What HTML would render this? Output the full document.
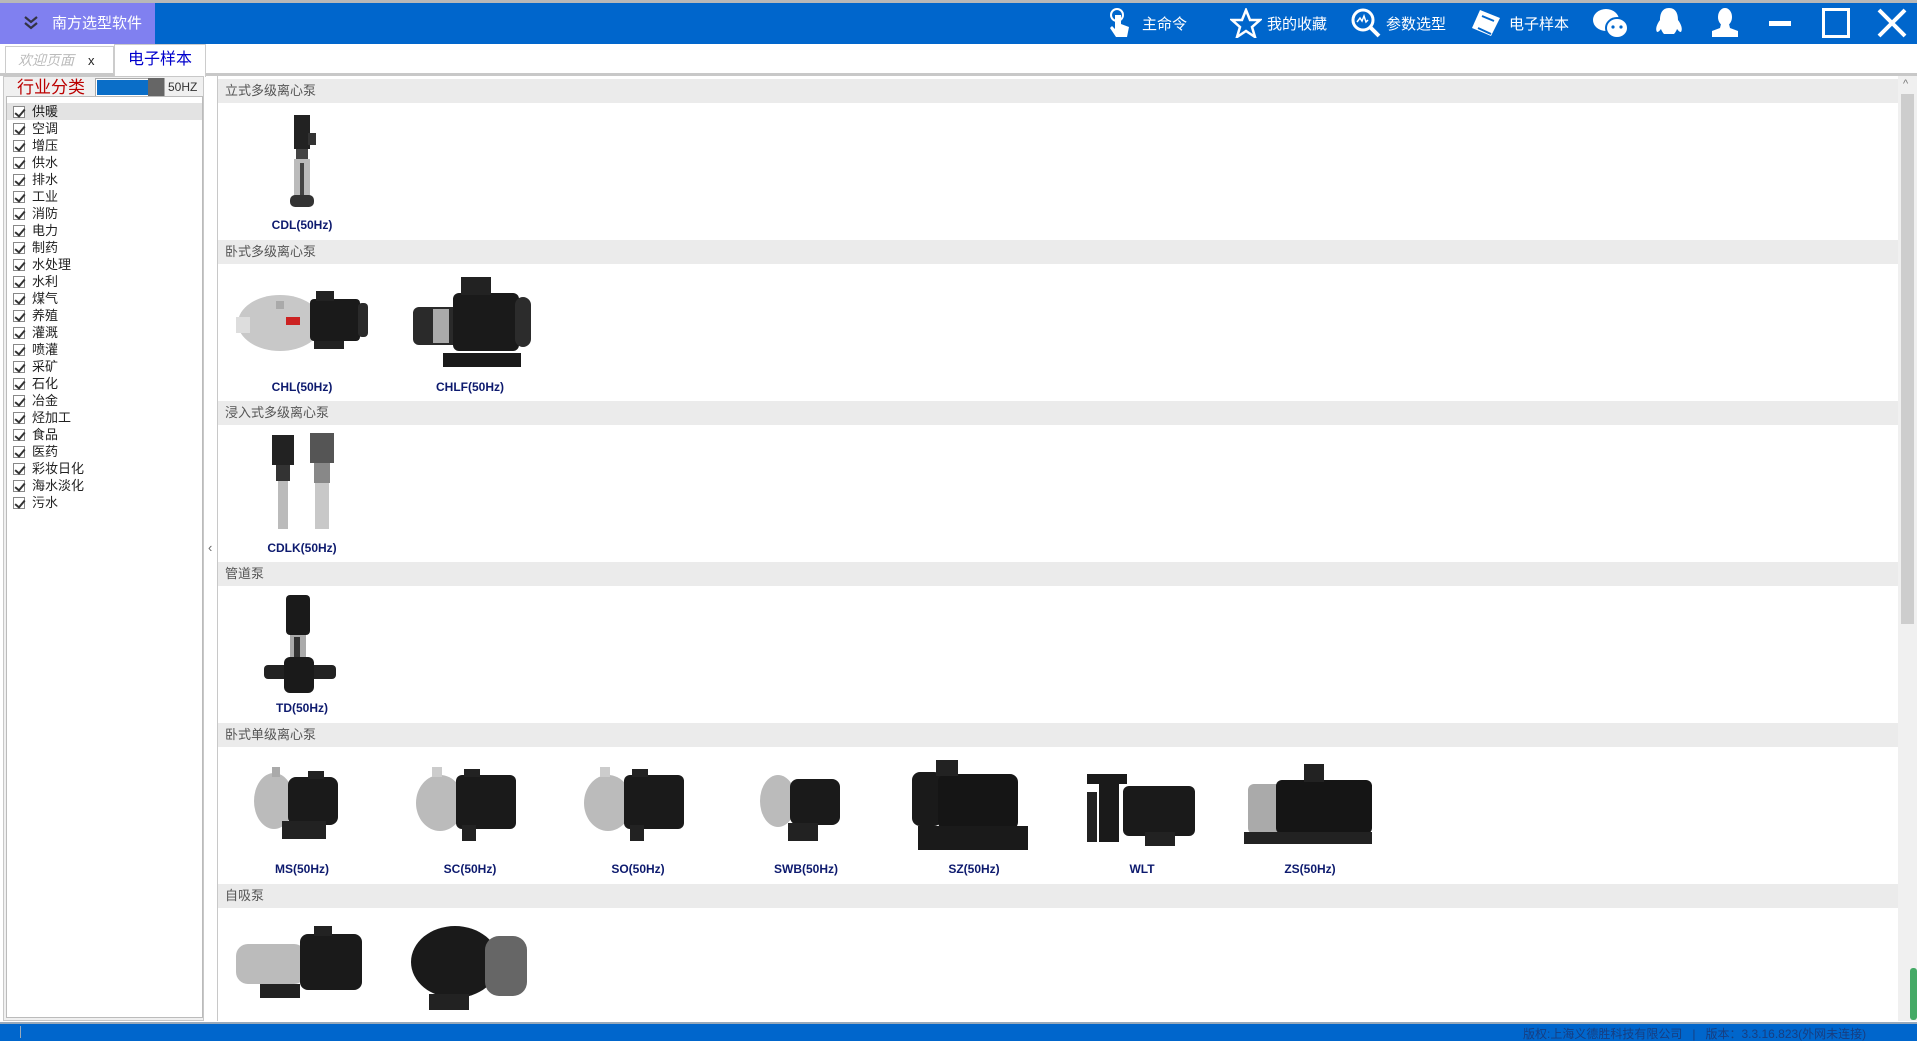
<!DOCTYPE html>
<html><head><meta charset="utf-8">
<style>
*{margin:0;padding:0;box-sizing:border-box}
body{width:1917px;height:1041px;overflow:hidden;background:#fff;font-family:"Liberation Sans","Noto Sans CJK SC",sans-serif;position:relative}
.a{position:absolute}
#title{left:0;top:0;width:1917px;height:44px;background:#0066cc;border-top:3px solid #b8b8b8}
#brand{left:0;top:3px;width:155px;height:41px;background:#8080f0;color:#fff;font-size:15px;line-height:41px;padding-left:52px}
.tt{color:#fff;font-size:15px;top:13px}
#tabs{left:0;top:44px;width:1917px;height:32px;background:#fff;border-bottom:3px solid #c8c8c8}
#side{left:3px;top:76px;width:201px;height:945px;background:#f0f0f0;border:1px solid #c8c8c8}
#list{left:6px;top:96px;width:197px;height:922px;background:#fff;border:1px solid #bbb}
.it{position:absolute;left:0;width:195px;height:17px;font-size:13px;line-height:17px;color:#222;padding-left:25px}
.cb{position:absolute;left:6px;top:3px;width:12px;height:12px;border:1px solid #888;background:#fff}
.cb:after{content:"";position:absolute;left:3px;top:0px;width:4px;height:8px;border:solid #333;border-width:0 2px 2px 0;transform:rotate(40deg)}
#main{left:217px;top:76px;width:1681px;height:945px;background:#fff;border-left:1px solid #c8c8c8}
.sh{position:absolute;left:218px;width:1680px;height:24px;background:#ebebeb;color:#555;font-size:13px;line-height:24px;padding-left:7px}
.lb{position:absolute;width:160px;text-align:center;font-size:12px;font-weight:bold;color:#0d1a6e}
.pm{position:absolute}
#status{left:0;top:1022px;width:1917px;height:19px;background:#0066cc;border-top:2px solid #9ab}
</style></head><body>
<div id="title" class="a"></div>
<div id="brand" class="a">南方选型软件</div>
<svg class="a" style="left:22px;top:15px" width="18" height="16" viewBox="0 0 18 16"><path d="M3 2l6 5 6-5M3 8l6 5 6-5" stroke="#334" stroke-width="2.2" fill="none"/></svg>

<!-- top right icons -->
<svg class="a" style="left:1108px;top:7px" width="22" height="32" viewBox="0 0 22 32"><circle cx="9" cy="8" r="6" fill="none" stroke="#fff" stroke-width="2"/><path d="M7 8v14l-3-3-2 2 6 9h11l2-10-8-3v-9" fill="#fff"/></svg>
<div class="a tt" style="left:1142px">主命令</div>
<svg class="a" style="left:1230px;top:8px" width="32" height="30" viewBox="0 0 32 30"><path d="M16 2l4 10h10l-8 7 3 10-9-6-9 6 3-10-8-7h10z" fill="none" stroke="#fff" stroke-width="2.5"/></svg>
<div class="a tt" style="left:1267px">我的收藏</div>
<svg class="a" style="left:1350px;top:7px" width="32" height="32" viewBox="0 0 32 32"><circle cx="13" cy="13" r="10" fill="none" stroke="#fff" stroke-width="3"/><path d="M20 20l9 9" stroke="#fff" stroke-width="4"/><path d="M7 15l3-4 2 3 2-5 2 6 2-2" stroke="#fff" stroke-width="1.5" fill="none"/></svg>
<div class="a tt" style="left:1386px">参数选型</div>
<svg class="a" style="left:1470px;top:8px" width="32" height="30" viewBox="0 0 32 30"><path d="M10 2l20 8-9 18L2 20z" fill="#fff"/><path d="M8 20l13 6M12 8l12 5" stroke="#0066cc" stroke-width="2"/></svg>
<div class="a tt" style="left:1509px">电子样本</div>
<svg class="a" style="left:1592px;top:7px" width="38" height="34" viewBox="0 0 38 34"><ellipse cx="14" cy="13" rx="13" ry="11" fill="#fff"/><ellipse cx="25" cy="21" rx="11" ry="10" fill="#fff" stroke="#0066cc" stroke-width="2"/><circle cx="21" cy="20" r="1.6" fill="#0066cc"/><circle cx="29" cy="20" r="1.6" fill="#0066cc"/></svg>
<svg class="a" style="left:1653px;top:6px" width="32" height="34" viewBox="0 0 32 34"><path d="M16 2c-7 0-9 6-9 12-3 4-5 9-3 12 2 0 3-2 4-3 1 3 3 5 3 5h10s2-2 3-5c1 1 2 3 4 3 2-3 0-8-3-12 0-6-2-12-9-12z" fill="#fff"/></svg>
<svg class="a" style="left:1710px;top:7px" width="30" height="32" viewBox="0 0 30 32"><ellipse cx="15" cy="10" rx="7" ry="9" fill="#fff"/><path d="M11 17h8l1 4 8 3v6H2v-6l8-3z" fill="#fff"/></svg>
<div class="a" style="left:1769px;top:21px;width:22px;height:5px;background:#fff"></div>
<div class="a" style="left:1822px;top:8px;width:28px;height:30px;border:3px solid #fff"></div>
<svg class="a" style="left:1876px;top:7px" width="32" height="32" viewBox="0 0 32 32"><path d="M3 3l26 26M29 3L3 29" stroke="#fff" stroke-width="4"/></svg>

<div id="tabs" class="a"></div>
<div class="a" style="left:5px;top:46px;width:109px;height:28px;border:1px solid #ccc;border-bottom:none;color:#bbb;font-style:italic;font-size:14px;line-height:26px;padding-left:12px">欢迎页面<span style="font-style:normal;color:#222;margin-left:14px;font-size:13px">x</span></div>
<div class="a" style="left:114px;top:44px;width:92px;height:33px;background:#fff;border:1px solid #ccc;border-bottom:none;color:#0000cc;font-size:16px;line-height:30px;text-align:center">电子样本</div>

<div id="side" class="a"></div>
<div class="a" style="left:17px;top:77px;color:#b00;font-size:17px;line-height:21px">行业分类</div>
<div class="a" style="left:95px;top:78px;width:70px;height:19px;border:1px solid #aaa;background:#fff"></div>
<div class="a" style="left:97px;top:80px;width:52px;height:15px;background:#0a6ec8"></div>
<div class="a" style="left:148px;top:78px;width:16px;height:19px;background:#666"></div>
<div class="a" style="left:168px;top:80px;font-size:12px;color:#333">50HZ</div>
<div id="list" class="a">
<div class="it" style="top:6px;background:#e3e3e3"><i class="cb"></i>供暖</div>
<div class="it" style="top:23px"><i class="cb"></i>空调</div>
<div class="it" style="top:40px"><i class="cb"></i>增压</div>
<div class="it" style="top:57px"><i class="cb"></i>供水</div>
<div class="it" style="top:74px"><i class="cb"></i>排水</div>
<div class="it" style="top:91px"><i class="cb"></i>工业</div>
<div class="it" style="top:108px"><i class="cb"></i>消防</div>
<div class="it" style="top:125px"><i class="cb"></i>电力</div>
<div class="it" style="top:142px"><i class="cb"></i>制药</div>
<div class="it" style="top:159px"><i class="cb"></i>水处理</div>
<div class="it" style="top:176px"><i class="cb"></i>水利</div>
<div class="it" style="top:193px"><i class="cb"></i>煤气</div>
<div class="it" style="top:210px"><i class="cb"></i>养殖</div>
<div class="it" style="top:227px"><i class="cb"></i>灌溉</div>
<div class="it" style="top:244px"><i class="cb"></i>喷灌</div>
<div class="it" style="top:261px"><i class="cb"></i>采矿</div>
<div class="it" style="top:278px"><i class="cb"></i>石化</div>
<div class="it" style="top:295px"><i class="cb"></i>冶金</div>
<div class="it" style="top:312px"><i class="cb"></i>烃加工</div>
<div class="it" style="top:329px"><i class="cb"></i>食品</div>
<div class="it" style="top:346px"><i class="cb"></i>医药</div>
<div class="it" style="top:363px"><i class="cb"></i>彩妆日化</div>
<div class="it" style="top:380px"><i class="cb"></i>海水淡化</div>
<div class="it" style="top:397px"><i class="cb"></i>污水</div>
</div>
<div class="a" style="left:208px;top:540px;color:#666;font-size:13px">‹</div>

<div id="main" class="a"></div>
<div class="a" style="left:1898px;top:76px;width:19px;height:945px;background:#f0f0f0"></div>
<div class="a" style="left:1901px;top:94px;width:13px;height:530px;background:#cdcdcd"></div>
<div class="a" style="left:1903px;top:78px;color:#777;font-size:11px">^</div>
<div class="a" style="left:1910px;top:968px;width:7px;height:52px;background:#4a6;border-radius:3px"></div>

<div class="sh" style="top:79px">立式多级离心泵</div>
<div class="sh" style="top:240px">卧式多级离心泵</div>
<div class="sh" style="top:401px">浸入式多级离心泵</div>
<div class="sh" style="top:562px">管道泵</div>
<div class="sh" style="top:723px">卧式单级离心泵</div>
<div class="sh" style="top:884px">自吸泵</div>

<!-- CDL vertical -->
<svg class="pm" style="left:282px;top:113px" width="40" height="97" viewBox="0 0 40 97"><rect x="12" y="2" width="16" height="34" fill="#222"/><rect x="26" y="20" width="8" height="12" fill="#333"/><rect x="14" y="36" width="12" height="10" fill="#444"/><rect x="12" y="46" width="16" height="38" fill="#bbb"/><rect x="18" y="50" width="4" height="32" fill="#444"/><rect x="8" y="82" width="24" height="12" rx="5" fill="#333"/></svg>
<div class="lb" style="left:222px;top:218px">CDL(50Hz)</div>

<!-- CHL, CHLF -->
<svg class="pm" style="left:230px;top:283px" width="145" height="80" viewBox="0 0 145 80"><ellipse cx="50" cy="40" rx="42" ry="28" fill="#c8c8c8"/><rect x="6" y="34" width="14" height="16" fill="#ddd"/><rect x="46" y="18" width="8" height="8" fill="#aaa"/><rect x="56" y="34" width="14" height="8" fill="#c22"/><rect x="80" y="16" width="50" height="42" rx="4" fill="#1a1a1a"/><rect x="86" y="8" width="18" height="10" fill="#222"/><rect x="128" y="20" width="10" height="34" rx="4" fill="#2a2a2a"/><rect x="84" y="58" width="30" height="8" fill="#222"/></svg>
<div class="lb" style="left:222px;top:380px">CHL(50Hz)</div>
<svg class="pm" style="left:405px;top:273px" width="135" height="100" viewBox="0 0 135 100"><rect x="8" y="34" width="48" height="38" rx="6" fill="#2a2a2a"/><rect x="28" y="36" width="16" height="34" fill="#aaa"/><rect x="48" y="20" width="66" height="58" rx="6" fill="#1a1a1a"/><rect x="56" y="4" width="30" height="18" fill="#222"/><rect x="110" y="24" width="16" height="50" rx="8" fill="#2c2c2c"/><rect x="38" y="80" width="78" height="14" fill="#1a1a1a"/></svg>
<div class="lb" style="left:390px;top:380px">CHLF(50Hz)</div>

<!-- CDLK -->
<svg class="pm" style="left:262px;top:433px" width="84" height="100" viewBox="0 0 84 100"><rect x="10" y="2" width="22" height="30" fill="#222"/><rect x="14" y="32" width="14" height="16" fill="#333"/><rect x="16" y="48" width="10" height="48" fill="#bbb"/><rect x="48" y="0" width="24" height="30" fill="#555"/><rect x="52" y="30" width="16" height="20" fill="#888"/><rect x="53" y="50" width="14" height="46" fill="#c8c8c8"/></svg>
<div class="lb" style="left:222px;top:541px">CDLK(50Hz)</div>

<!-- TD -->
<svg class="pm" style="left:260px;top:593px" width="80" height="103" viewBox="0 0 80 103"><rect x="26" y="2" width="24" height="40" rx="4" fill="#1a1a1a"/><rect x="30" y="42" width="16" height="24" fill="#aaa"/><rect x="34" y="44" width="6" height="20" fill="#333"/><rect x="4" y="72" width="72" height="14" rx="4" fill="#222"/><rect x="24" y="64" width="30" height="36" rx="6" fill="#1a1a1a"/></svg>
<div class="lb" style="left:222px;top:701px">TD(50Hz)</div>

<!-- single stage row -->
<svg class="pm" style="left:252px;top:763px" width="100" height="82" viewBox="0 0 100 82"><ellipse cx="22" cy="38" rx="20" ry="28" fill="#bbb"/><rect x="20" y="4" width="8" height="10" fill="#aaa"/><rect x="36" y="14" width="50" height="48" rx="8" fill="#1a1a1a"/><rect x="56" y="8" width="16" height="8" fill="#222"/><rect x="30" y="58" width="44" height="18" fill="#222"/></svg>
<div class="lb" style="left:222px;top:862px">MS(50Hz)</div>
<svg class="pm" style="left:412px;top:765px" width="115" height="82" viewBox="0 0 115 82"><ellipse cx="28" cy="38" rx="24" ry="28" fill="#bbb"/><rect x="20" y="2" width="10" height="10" fill="#ccc"/><rect x="44" y="10" width="60" height="54" rx="6" fill="#1a1a1a"/><rect x="52" y="4" width="16" height="8" fill="#222"/><rect x="50" y="60" width="14" height="16" fill="#222"/></svg>
<div class="lb" style="left:390px;top:862px">SC(50Hz)</div>
<svg class="pm" style="left:580px;top:765px" width="115" height="82" viewBox="0 0 115 82"><ellipse cx="28" cy="38" rx="24" ry="28" fill="#bbb"/><rect x="20" y="2" width="10" height="10" fill="#ccc"/><rect x="44" y="10" width="60" height="54" rx="6" fill="#1a1a1a"/><rect x="52" y="4" width="16" height="8" fill="#222"/><rect x="50" y="60" width="14" height="16" fill="#222"/></svg>
<div class="lb" style="left:558px;top:862px">SO(50Hz)</div>
<svg class="pm" style="left:758px;top:765px" width="95" height="82" viewBox="0 0 95 82"><ellipse cx="20" cy="36" rx="18" ry="26" fill="#bbb"/><rect x="32" y="14" width="50" height="46" rx="8" fill="#1a1a1a"/><rect x="30" y="58" width="30" height="18" fill="#222"/></svg>
<div class="lb" style="left:726px;top:862px">SWB(50Hz)</div>
<svg class="pm" style="left:908px;top:756px" width="130" height="100" viewBox="0 0 130 100"><rect x="4" y="16" width="30" height="54" rx="8" fill="#1a1a1a"/><rect x="30" y="18" width="80" height="56" rx="8" fill="#151515"/><rect x="28" y="4" width="22" height="16" fill="#222"/><rect x="10" y="70" width="110" height="24" fill="#1a1a1a"/></svg>
<div class="lb" style="left:894px;top:862px">SZ(50Hz)</div>
<svg class="pm" style="left:1085px;top:772px" width="120" height="80" viewBox="0 0 120 80"><rect x="2" y="2" width="40" height="10" fill="#1a1a1a"/><rect x="14" y="10" width="20" height="60" fill="#1a1a1a"/><rect x="2" y="20" width="10" height="50" fill="#222"/><rect x="38" y="14" width="72" height="50" rx="6" fill="#1a1a1a"/><rect x="60" y="60" width="30" height="14" fill="#222"/></svg>
<div class="lb" style="left:1062px;top:862px">WLT</div>
<svg class="pm" style="left:1240px;top:760px" width="140" height="90" viewBox="0 0 140 90"><rect x="8" y="24" width="34" height="50" rx="6" fill="#aaa"/><rect x="36" y="20" width="96" height="54" rx="6" fill="#151515"/><rect x="64" y="4" width="20" height="18" fill="#222"/><rect x="4" y="72" width="128" height="12" fill="#222"/></svg>
<div class="lb" style="left:1230px;top:862px">ZS(50Hz)</div>

<!-- self priming -->
<svg class="pm" style="left:230px;top:922px" width="145" height="86" viewBox="0 0 145 86"><rect x="6" y="22" width="70" height="40" rx="12" fill="#bbb"/><rect x="70" y="12" width="62" height="56" rx="8" fill="#1a1a1a"/><rect x="84" y="4" width="18" height="10" fill="#222"/><rect x="30" y="62" width="40" height="14" fill="#222"/></svg>
<svg class="pm" style="left:405px;top:920px" width="135" height="100" viewBox="0 0 135 100"><ellipse cx="50" cy="42" rx="44" ry="36" fill="#1a1a1a"/><rect x="80" y="16" width="42" height="60" rx="14" fill="#666"/><rect x="24" y="74" width="40" height="16" fill="#222"/></svg>

<div id="status" class="a"></div>
<div class="a" style="left:20px;top:1026px;width:1px;height:12px;background:#9ab"></div>
<div class="a" style="left:1523px;top:1025px;font-size:12px;color:#173e80">版权:上海义德胜科技有限公司 &nbsp; | &nbsp; 版本：3.3.16.823(外网未连接)</div>
</body></html>
